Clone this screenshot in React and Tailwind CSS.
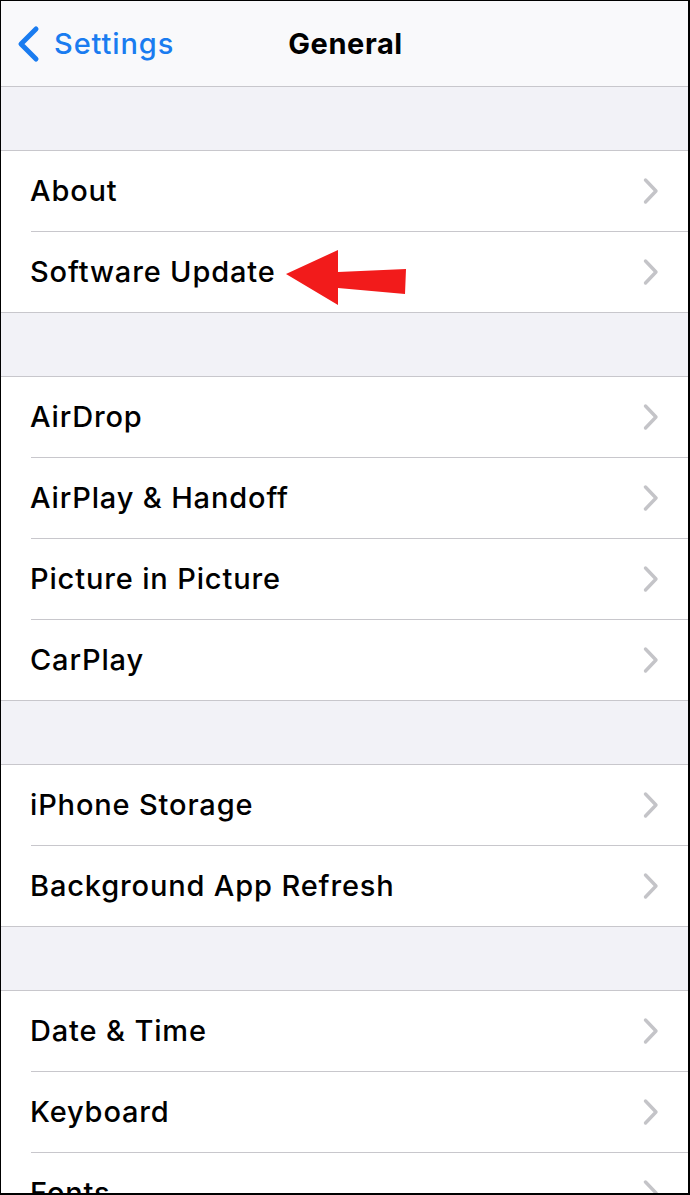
import React from "react";

const groups = [
  ["About", "Software Update"],
  ["AirDrop", "AirPlay & Handoff", "Picture in Picture", "CarPlay"],
  ["iPhone Storage", "Background App Refresh"],
  ["Date & Time", "Keyboard", "Fonts"],
];

function Chevron() {
  return (
    <svg width="18" height="28" viewBox="0 0 18 28" className="shrink-0">
      <path d="M3.5 3 L14 14 L3.5 25" fill="none" stroke="#c4c4c8" strokeWidth="3.4" strokeLinecap="round" strokeLinejoin="round" />
    </svg>
  );
}

function Row({ label, last }) {
  return (
    <div className="pl-[30px] bg-white">
      <div className={`flex items-center justify-between pr-[28px] ${last ? "h-[80px]" : "h-[81px] border-b border-[#c8c7cc]"}`}>
        <span className="text-[29px] font-medium text-black tracking-[0.85px] -ml-[1px]">{label}</span>
        <Chevron />
      </div>
    </div>
  );
}

export default function App() {
  return (
    <div className="w-[690px] h-[1195px] overflow-hidden border-l border-t border-r-2 border-b-2 border-black bg-[#f2f2f7] font-['Inter',sans-serif] relative">
      <div className="h-[86px] bg-[#f9f9fb] border-b border-[#c8c7cc] relative flex items-center">
        <div className="flex items-center pl-[14px] gap-[13px] text-[#1a7cf0]">
          <svg width="26" height="38" viewBox="0 0 26 38">
            <path d="M21 4 L6 19 L21 34" fill="none" stroke="#1a7cf0" strokeWidth="5" strokeLinecap="round" strokeLinejoin="round" />
          </svg>
          <span className="text-[29px] font-medium tracking-[0.9px]">Settings</span>
        </div>
        <div className="absolute inset-0 flex items-center justify-center pl-[2px]">
          <span className="text-[29px] font-bold text-black tracking-[0.6px]">General</span>
        </div>
      </div>

      {groups.map((g, gi) => (
        <div key={gi}>
          <div className="h-[63px]" />
          <div className="border-t border-b border-[#c8c7cc] bg-white">
            {g.map((label, i) => (
              <Row key={label} label={label} last={i === g.length - 1} />
            ))}
          </div>
        </div>
      ))}

      {/* red annotation arrow */}
      <svg className="absolute left-[283px] top-[247px]" width="126" height="60" viewBox="283 247 126 60">
        <polygon points="285,273 337,249 337,271 405,268 404,293 337,287 337,304" fill="#f21b1b" />
      </svg>
    </div>
  );
}
